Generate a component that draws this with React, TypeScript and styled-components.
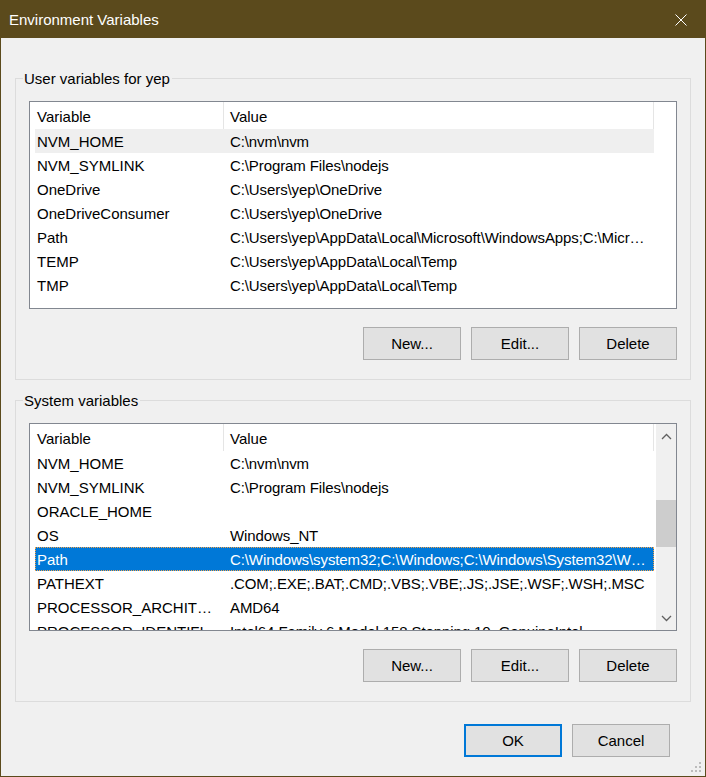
import React from 'react'
import { createGlobalStyle, styled } from 'styled-components'

const GlobalStyle = createGlobalStyle`
  html, body {
    margin: 0;
    padding: 0;
    background: #f0f0f0;
  }
  body {
    font-family: "Liberation Sans", Arial, sans-serif;
    font-size: 15px;
    color: #000;
  }
`

interface IVar {
  name: string
  value: string
}

const userVars: IVar[] = [
  { name: 'NVM_HOME', value: 'C:\\nvm\\nvm' },
  { name: 'NVM_SYMLINK', value: 'C:\\Program Files\\nodejs' },
  { name: 'OneDrive', value: 'C:\\Users\\yep\\OneDrive' },
  { name: 'OneDriveConsumer', value: 'C:\\Users\\yep\\OneDrive' },
  { name: 'Path', value: 'C:\\Users\\yep\\AppData\\Local\\Microsoft\\WindowsApps;C:\\Microsoft VS Code\\bin' },
  { name: 'TEMP', value: 'C:\\Users\\yep\\AppData\\Local\\Temp' },
  { name: 'TMP', value: 'C:\\Users\\yep\\AppData\\Local\\Temp' },
]

const systemVars: IVar[] = [
  { name: 'NVM_HOME', value: 'C:\\nvm\\nvm' },
  { name: 'NVM_SYMLINK', value: 'C:\\Program Files\\nodejs' },
  { name: 'ORACLE_HOME', value: '' },
  { name: 'OS', value: 'Windows_NT' },
  { name: 'Path', value: 'C:\\Windows\\system32;C:\\Windows;C:\\Windows\\System32\\Wbem;C:\\Windows\\System32\\WindowsPowerShell' },
  { name: 'PATHEXT', value: '.COM;.EXE;.BAT;.CMD;.VBS;.VBE;.JS;.JSE;.WSF;.WSH;.MSC' },
  { name: 'PROCESSOR_ARCHITECTURE', value: 'AMD64' },
  { name: 'PROCESSOR_IDENTIFIER', value: 'Intel64 Family 6 Model 158 Stepping 10, GenuineIntel' },
]

function VarList({ vars, hot, selected, scroll }: { vars: IVar[]; hot?: number; selected?: number; scroll?: boolean }) {
  return (
    <ListBox>
      <ListContent>
        <Header>
          <HeaderCell $width={194} $pad={7}>Variable</HeaderCell>
          <HeaderCell $width={430} $pad={6}>Value</HeaderCell>
        </Header>
        {vars.map((v, i) => (
          <Row key={v.name} $hot={i === hot} $selected={i === selected}>
            <NameCell>{v.name}</NameCell>
            <ValueCell>{v.value}</ValueCell>
          </Row>
        ))}
      </ListContent>
      {scroll && (
        <ScrollBar>
          <ScrollArrow>
            <svg width="11" height="7" viewBox="0 0 11 7">
              <path d="M1 6 L5.5 1.5 L10 6" fill="none" stroke="#606060" strokeWidth="1.3" />
            </svg>
          </ScrollArrow>
          <ScrollTrack>
            <Thumb />
          </ScrollTrack>
          <ScrollArrow>
            <svg width="11" height="7" viewBox="0 0 11 7">
              <path d="M1 1 L5.5 5.5 L10 1" fill="none" stroke="#606060" strokeWidth="1.3" />
            </svg>
          </ScrollArrow>
        </ScrollBar>
      )}
    </ListBox>
  )
}

function App() {
  return (
    <>
      <GlobalStyle />
      <Window>
        <TitleBar>
          <Title>Environment Variables</Title>
          <CloseButton>
            <svg width="12" height="12" viewBox="0 0 12 12">
              <path d="M0.5 0.5 L11.5 11.5 M11.5 0.5 L0.5 11.5" stroke="#ffffff" strokeWidth="1" />
            </svg>
          </CloseButton>
        </TitleBar>
        <Body>
          <GroupBox>
            <Legend>User variables for yep</Legend>
            <VarList vars={userVars} hot={0} />
            <ButtonRow>
              <Button>New...</Button>
              <Button>Edit...</Button>
              <Button>Delete</Button>
            </ButtonRow>
          </GroupBox>
          <GroupBox $gap={20}>
            <Legend>System variables</Legend>
            <VarList vars={systemVars} selected={4} scroll />
            <ButtonRow>
              <Button>New...</Button>
              <Button>Edit...</Button>
              <Button>Delete</Button>
            </ButtonRow>
          </GroupBox>
          <DialogButtons>
            <Button $primary>OK</Button>
            <Button>Cancel</Button>
          </DialogButtons>
        </Body>
        <SizeGrip>
          <svg width="12" height="12" viewBox="0 0 12 12" fill="#bcbcbc">
            <rect x="8" y="0" width="2" height="2" />
            <rect x="4" y="4" width="2" height="2" />
            <rect x="8" y="4" width="2" height="2" />
            <rect x="0" y="8" width="2" height="2" />
            <rect x="4" y="8" width="2" height="2" />
            <rect x="8" y="8" width="2" height="2" />
          </svg>
        </SizeGrip>
      </Window>
    </>
  )
}

const Window = styled.div`
  position: relative;
  width: 706px;
  height: 777px;
  box-sizing: border-box;
  border: 1px solid #5b4a1c;
  border-top: none;
  background: #f0f0f0;
  display: flex;
  flex-direction: column;
`

const TitleBar = styled.div`
  height: 38px;
  flex: 0 0 38px;
  background: #5b4a1c;
  display: flex;
  align-items: center;
  justify-content: space-between;
  padding-left: 8px;
  color: #fff;
`

const Title = styled.div`
  font-size: 15px;
  line-height: 38px;
  padding-top: 1px;
`

const CloseButton = styled.div`
  width: 46px;
  height: 38px;
  display: flex;
  align-items: center;
  justify-content: center;
  padding-right: 1px;
  padding-top: 1px;
`

const Body = styled.div`
  padding: 40px 14px 0 14px;
  display: flex;
  flex-direction: column;
`

const GroupBox = styled.div<{ $gap?: number }>`
  position: relative;
  margin-top: ${({ $gap }) => $gap ?? 0}px;
  border: 1px solid #dcdcdc;
  padding: 22px 13px 19px 13px;
`

const Legend = styled.span`
  position: absolute;
  top: -10px;
  left: 7px;
  padding: 0 2px 0 1px;
  background: #f0f0f0;
  line-height: 19px;
`

const ListBox = styled.div`
  height: 208px;
  box-sizing: border-box;
  border: 1px solid #828790;
  background: #fff;
  display: flex;
  overflow: hidden;
`

const ListContent = styled.div`
  flex: 1;
  overflow: hidden;
`

const Header = styled.div`
  display: flex;
  height: 27px;
`

const HeaderCell = styled.div<{ $width: number; $pad: number }>`
  width: ${({ $width }) => $width}px;
  box-sizing: border-box;
  padding-left: ${({ $pad }) => $pad}px;
  padding-top: 2px;
  line-height: 25px;
  border-right: 1px solid #e5e5e5;
`

const Row = styled.div<{ $hot?: boolean; $selected?: boolean }>`
  position: relative;
  display: flex;
  width: 619px;
  margin-left: 5px;
  height: 24px;
  line-height: 26px;
  background: ${({ $hot, $selected }) => ($selected ? '#0078d7' : $hot ? '#efefef' : 'transparent')};
  color: ${({ $selected }) => ($selected ? '#fff' : '#000')};

  &::after {
    content: '';
    display: ${({ $selected }) => ($selected ? 'block' : 'none')};
    position: absolute;
    inset: 0;
    border: 1px dotted #f5a34a;
  }
`

const NameCell = styled.div`
  width: 188px;
  box-sizing: border-box;
  padding: 0 1px 0 2px;
  white-space: nowrap;
  overflow: hidden;
  text-overflow: ellipsis;
`

const ValueCell = styled.div`
  width: 431px;
  box-sizing: border-box;
  padding: 0 3px 0 7px;
  letter-spacing: -0.1px;
  white-space: nowrap;
  overflow: hidden;
  text-overflow: ellipsis;
`

const ScrollBar = styled.div`
  width: 21px;
  flex: 0 0 21px;
  background: #f0f0f0;
  border-left: 1px solid #fff;
  box-sizing: border-box;
  display: flex;
  flex-direction: column;
`

const ScrollArrow = styled.div`
  height: 24px;
  display: flex;
  align-items: center;
  justify-content: center;
`

const ScrollTrack = styled.div`
  flex: 1;
  padding-top: 52px;
`

const Thumb = styled.div`
  height: 47px;
  background: #cdcdcd;
`

const ButtonRow = styled.div`
  margin-top: 18px;
  display: flex;
  justify-content: flex-end;
  gap: 10px;
`

const Button = styled.button<{ $primary?: boolean }>`
  width: 98px;
  height: 33px;
  box-sizing: border-box;
  margin: 0;
  padding: 0;
  font-family: "Liberation Sans", Arial, sans-serif;
  font-size: 15px;
  color: #000;
  background: #e1e1e1;
  border: ${({ $primary }) => ($primary ? '2px solid #0078d7' : '1px solid #adadad')};
  border-radius: 0;
`

const DialogButtons = styled.div`
  margin-top: 22px;
  padding-right: 21px;
  display: flex;
  justify-content: flex-end;
  gap: 10px;
`

const SizeGrip = styled.div`
  position: absolute;
  right: 2px;
  bottom: 2px;
  width: 12px;
  height: 12px;
  display: flex;
`

export default App
